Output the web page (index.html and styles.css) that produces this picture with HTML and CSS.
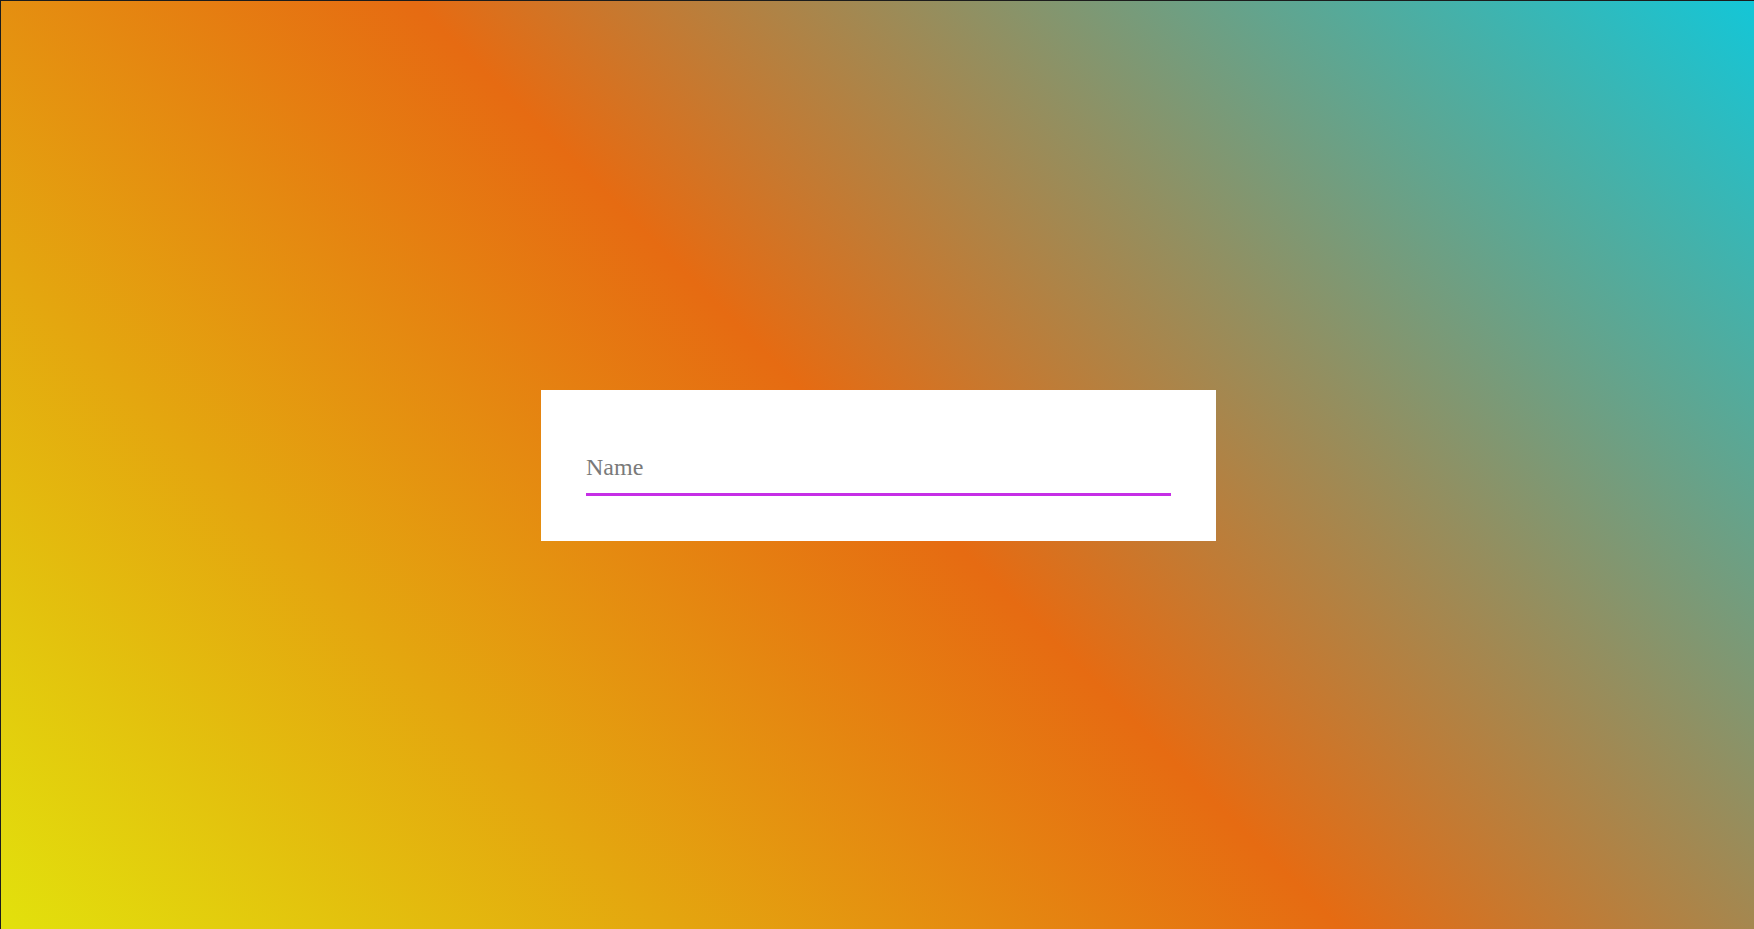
FILE: index.html
```html
<!DOCTYPE html>
<html lang="en">
<head>
<meta charset="utf-8">
<title>Name</title>
<link rel="stylesheet" href="styles.css">
</head>
<body>
<main class="page">
  <form class="card">
    <label class="field">
      <span class="field-label">Name</span>
    </label>
  </form>
</main>
</body>
</html>
```
FILE: styles.css
```css
html, body {
  margin: 0;
  padding: 0;
  height: 100%;
}
body {
  font-family: "Liberation Serif", "Times New Roman", serif;
}
.page {
  box-sizing: border-box;
  height: 929px;
  border-top: 1px solid #1c1c1c;
  border-left: 1px solid #1c1c1c;
  background: linear-gradient(45deg, #e2e10c 0%, #e66b12 50%, #14c6d7 100%);
  display: flex;
  align-items: center;
  justify-content: center;
}
.card {
  box-sizing: border-box;
  width: 675px;
  height: 151px;
  padding: 45px;
  background: #ffffff;
  margin: 1px 0 0 2px;
}
.field {
  box-sizing: border-box;
  display: flex;
  align-items: flex-end;
  height: 61px;
  padding-bottom: 14px;
  border-bottom: 3px solid #c62ee6;
}
.field-label {
  font-size: 24px;
  line-height: 24px;
  color: #7a7a7a;
}
```
